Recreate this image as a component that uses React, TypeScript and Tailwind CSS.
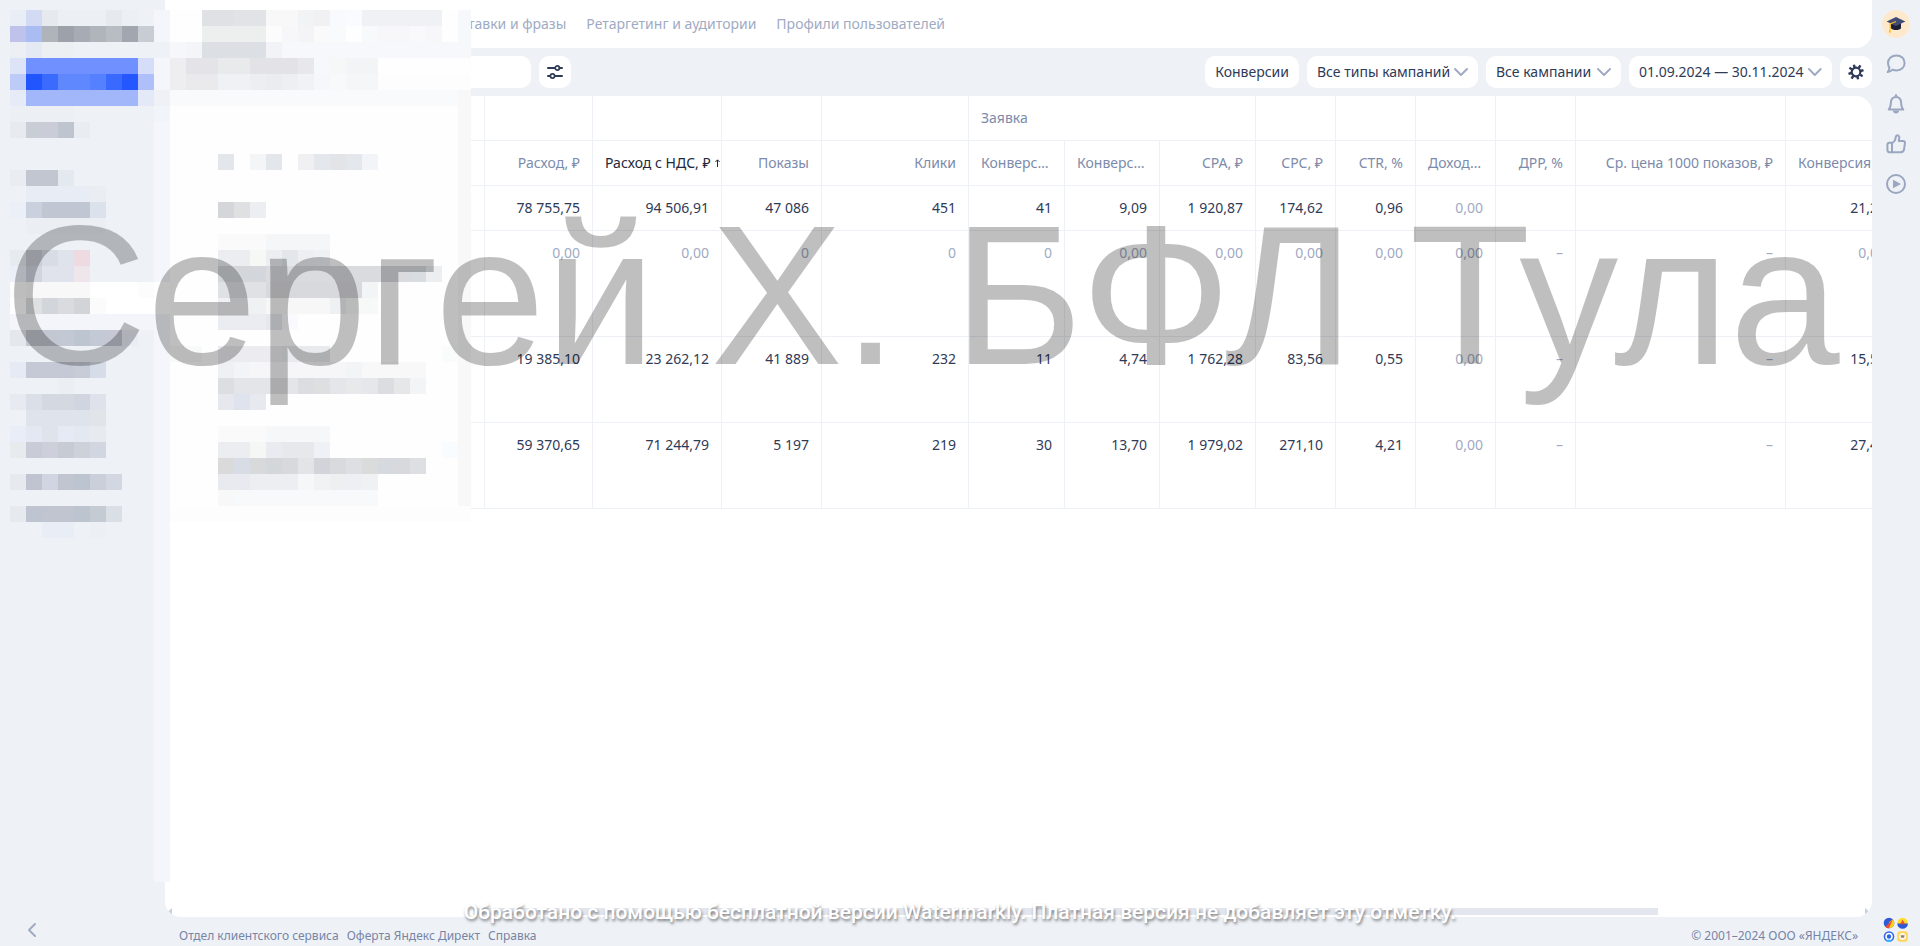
import clsx from 'clsx'
import { ChevronDown, ChevronLeft } from 'lucide-react'

type Tile = [col: number, color: string, span?: number]

const TILE = 16

// Censored area: each key is a row of the mosaic, each tile is [column, colour, span].
const mosaic: Record<number, Tile[]> = {
  0: [[0, '#e9eef6'], [1, '#d2daf4'], [2, '#e6eaef'], [3, '#ecf0f5', 3], [6, '#e6eaef'], [7, '#ecf0f5'], [12, '#dfe1e5', 2], [14, '#e2e3e7', 2], [16, '#f8f8f8', 2], [18, '#f2f3f4'], [19, '#f1f1f3'], [20, '#f8fafd'], [21, '#fafbfe'], [22, '#eff1f5', 5], [28, '#f7f8fb']],
  1: [[0, '#bfc2ea'], [1, '#a9bdf3'], [2, '#afb3ba'], [3, '#9da1a9'], [4, '#a7abb3'], [5, '#b0b4bb'], [6, '#b8bdc4'], [7, '#a2a6af'], [8, '#c8cdd4'], [12, '#edeeee', 4], [16, '#fcfcfc'], [17, '#f7f7f9'], [18, '#f4f4f6'], [19, '#fafafa'], [20, '#f9fafc'], [22, '#f8f9fb'], [23, '#f7f6f8', 2], [25, '#f9f9fc'], [26, '#f7f7fa'], [28, '#f7f8fb']],
  2: [[0, '#ecf0f4'], [1, '#e4e9f4'], [2, '#ecf0f3', 2], [8, '#eef2f7', 2], [10, '#f5f7fa'], [11, '#f3f5f8'], [12, '#dce0e5', 4], [16, '#f1f3f6'], [17, '#f6f8fc', 12]],
  3: [[0, '#dde4f8'], [1, '#7090ff', 7], [8, '#d5ddf8'], [10, '#eeeef0'], [11, '#e4e4e8', 2], [13, '#e9eaeb', 2], [15, '#e3e3e7', 3], [18, '#e8e8ec'], [19, '#f7f8fb'], [20, '#f6f8f8'], [21, '#f3f4f6', 2]],
  4: [[0, '#bccbf8'], [1, '#2156ff'], [2, '#3b6aff'], [3, '#5f88ff', 2], [5, '#5580ff'], [6, '#3a69ff'], [7, '#2457ff'], [8, '#aebffa'], [10, '#eeeef0'], [11, '#eaeaed', 2], [13, '#f0f1f4', 2], [15, '#edeef1'], [16, '#ebecf0'], [17, '#eeeff3'], [18, '#f1f2f5'], [19, '#f5f7fb'], [20, '#f7f9fb'], [21, '#f5f6f8', 2], [23, '#fdfdfd', 6]],
  5: [[0, '#e7ebf7'], [1, '#a2b6fa', 7], [8, '#e3e9f6'], [9, '#eff1f7'], [10, '#f8fafc', 18]],
  6: [[0, '#ecf0f5', 4], [9, '#f1f5f9']],
  7: [[0, '#e7ebef'], [1, '#c9cdd6'], [2, '#cacdd7'], [3, '#bfc5cf'], [4, '#e9edf2']],
  9: [[13, '#e3e7eb'], [15, '#f4f5f7'], [16, '#e3e7eb'], [18, '#f0f0f2'], [19, '#e4e8ed'], [20, '#e3e4e8'], [21, '#e4e8ed'], [22, '#f2f4f8']],
  10: [[0, '#e9edf1'], [1, '#c2c6d0', 2], [3, '#e4e8ef']],
  11: [[1, '#e7ecf5', 4], [5, '#eaeef3']],
  12: [[0, '#ebeff7'], [1, '#cad0de'], [2, '#c1c6d3', 3], [5, '#dce2eb'], [13, '#d5d6d9'], [14, '#dfe0e1'], [15, '#eceef2']],
  13: [[1, '#ebeff4', 5]],
  14: [[13, '#fafafa', 3], [16, '#f5f6f8', 4]],
  15: [[0, '#e6ebef'], [1, '#c9cdd5'], [2, '#d8dce5'], [3, '#dfe3ec'], [4, '#eddbe1'], [13, '#ebedf1', 2], [15, '#f6f8f6'], [16, '#eceef2'], [17, '#e3e7eb'], [18, '#edeff2'], [19, '#eff1f5']],
  16: [[0, '#ebeff7'], [1, '#d0d5df'], [2, '#e0e3ec', 2], [4, '#efe6eb'], [13, '#d3d7db', 3], [16, '#dadbdf', 9], [25, '#d9dde1'], [26, '#edeef0']],
  17: [[0, '#fcfcfd'], [1, '#f8f8f8', 4], [5, '#ffffff', 3], [8, '#fcfcfc'], [9, '#ffffff'], [13, '#dfe1e5', 3], [16, '#d8d9dd', 6], [22, '#f2f4f6']],
  18: [[0, '#ffffff'], [1, '#dfe0e2'], [2, '#d2d6db'], [3, '#dadbde'], [4, '#d3d4d8'], [5, '#fbfbfb'], [6, '#ffffff', 4], [13, '#f0f1f3', 3], [16, '#f7f7f7', 4], [20, '#eff0f2'], [21, '#f7f8f8', 2]],
  19: [[0, '#f3f5fa', 9], [13, '#ebecf1', 3], [16, '#e6e8ed'], [17, '#fafafe']],
  20: [[0, '#e4e8ed'], [1, '#c3c7d1', 2], [3, '#c2c8d4'], [4, '#bcc5d0'], [5, '#c3cad5'], [6, '#c6c9d4'], [7, '#e9edf4']],
  21: [[10, '#f8f9f9', 2], [13, '#ececf0', 4], [17, '#e9eaed', 3], [27, '#fafcfc']],
  22: [[0, '#e6eaf5'], [1, '#c4c9d5', 3], [4, '#c7ccd7'], [5, '#d6dce8'], [13, '#eff0f3'], [14, '#f3f4f7'], [15, '#f6f6f8', 6], [21, '#f3f4f6'], [22, '#f8f8f9', 4]],
  23: [[3, '#ebeff4'], [13, '#dddee2'], [14, '#e4e5e9', 4], [18, '#dcdde1'], [19, '#dedfe1'], [20, '#e4e6e9'], [21, '#e8e9eb'], [22, '#e5e7ea'], [23, '#dcdde1'], [24, '#e6e7e9'], [25, '#f3f4f6']],
  24: [[0, '#e7ebf1'], [1, '#dadfe8'], [2, '#d4d8e0', 2], [4, '#d1d5df'], [5, '#dfe2ea'], [13, '#e6e8ed'], [14, '#dfe3ed'], [15, '#e8e9ee']],
  25: [[1, '#dfe3ec', 4], [5, '#e1e5ea']],
  26: [[0, '#e9edf8'], [1, '#e4e8f2'], [2, '#dfe3eb'], [3, '#e5eaf4'], [4, '#e4e8f0'], [5, '#e7ebf0'], [13, '#fafafa', 3], [16, '#f6f7f9', 4]],
  27: [[0, '#e7ebee'], [1, '#c9ccd6'], [2, '#cdd0da'], [3, '#c7cbd4'], [4, '#cdd1da'], [5, '#d2d6e0'], [13, '#ebedf1', 2], [15, '#f5f7f5'], [16, '#e9ebf0'], [17, '#e7e8ec', 2], [19, '#eff1f6'], [27, '#f9fcfe']],
  28: [[13, '#dadada'], [14, '#d8dce5'], [15, '#d8d9db'], [16, '#d3d7da'], [17, '#d8d9dc'], [18, '#e3e4e8'], [19, '#d2d4d9'], [20, '#d9dade'], [21, '#dedfe3'], [22, '#dadbdb'], [23, '#d6dadf'], [24, '#d8d9dd'], [25, '#dddfe3']],
  29: [[0, '#e6eaee'], [1, '#bfc4d0'], [2, '#d0d5e1'], [3, '#c0c5d0'], [4, '#bcc4cf'], [5, '#cbcfd9'], [6, '#d3d7e2'], [13, '#e8eaef', 2], [15, '#edeef2', 3], [18, '#f6f7f9'], [19, '#f0f2f4'], [20, '#eeeff1'], [21, '#edeff4'], [22, '#f0f1f3']],
  30: [[13, '#f8f8f8'], [14, '#f8f9fa', 9]],
  31: [[0, '#e6eaee'], [1, '#bfc4d1'], [2, '#c1c5d0', 2], [4, '#bcc4cf'], [5, '#c4cbd3'], [6, '#dadfe5'], [10, '#fdfdfd', 19]],
  32: [[2, '#e9edf6', 2], [5, '#ecf0f4']],
}

function Mosaic() {
  return (
    <svg width="461" height="872" viewBox="0 0 461 872" shapeRendering="crispEdges" aria-hidden="true" className="pointer-events-none absolute left-[10px] top-[10px]">
      <rect width="144" height="872" fill="#eef2f7" />
      <rect x="160" width="301" height="512" fill="#fefefe" />
      <rect x="144" width="16" height="872" fill="#f4f6fb" />
      <rect x="448" y="80" width="16" height="416" fill="#f8f8f8" />
      {Object.entries(mosaic).map(([row, tiles]) =>
        tiles.map(([col, color, span = 1]) => (
          <rect key={`${row}-${col}`} x={col * TILE} y={Number(row) * TILE} width={span * TILE} height={TILE} fill={color} />
        )),
      )}
    </svg>
  )
}

const columns = [
  { title: '', width: 'w-[320px]' },
  { title: 'Расход, ₽', width: 'w-[108px]' },
  { title: 'Расход с НДС, ₽', width: 'w-[129px]', sorted: true },
  { title: 'Показы', width: 'w-[100px]' },
  { title: 'Клики', width: 'w-[147px]' },
  { title: 'Конверсии', width: 'w-[96px]' },
  { title: 'Конверсия, %', width: 'w-[95px]' },
  { title: 'CPA, ₽', width: 'w-[96px]' },
  { title: 'CPC, ₽', width: 'w-[80px]' },
  { title: 'CTR, %', width: 'w-[80px]' },
  { title: 'Доход, ₽', width: 'w-[80px]' },
  { title: 'ДРР, %', width: 'w-[80px]' },
  { title: 'Ср. цена 1000 показов, ₽', width: 'w-[210px]' },
  { title: 'Конверсия, %', width: 'w-[113px]' },
]

const rows = [
  { height: 'h-[45px]', cells: ['78 755,75', '94 506,91', '47 086', '451', '41', '9,09', '1 920,87', '174,62', '0,96', '0,00', '', '', '21,28'] },
  { height: 'h-[106px]', cells: ['0,00', '0,00', '0', '0', '0', '0,00', '0,00', '0,00', '0,00', '0,00', '–', '–', '0,00'] },
  { height: 'h-[86px]', cells: ['19 385,10', '23 262,12', '41 889', '232', '11', '4,74', '1 762,28', '83,56', '0,55', '0,00', '–', '–', '15,52'] },
  { height: 'h-[86px]', cells: ['59 370,65', '71 244,79', '5 197', '219', '30', '13,70', '1 979,02', '271,10', '4,21', '0,00', '–', '–', '27,40'] },
]

const isEmpty = (value: string) => value === '0' || value === '0,00' || value === '–'

function StatsTable() {
  return (
    <table className="w-[1734px] table-fixed border-separate border-spacing-0 text-sm leading-5">
      <colgroup>
        {columns.map((column, i) => (
          <col key={i} className={column.width} />
        ))}
      </colgroup>
      <thead className="text-[#7d8bab]">
        <tr className="h-[45px]">
          {columns.slice(0, 5).map((_, i) => (
            <td key={i} className="border-b border-r border-[#edf0f5]" />
          ))}
          <th colSpan={3} className="border-b border-r border-[#edf0f5] px-3 text-left font-normal">Заявка</th>
          {columns.slice(8).map((_, i) => (
            <td key={i} className="border-b border-r border-[#edf0f5]" />
          ))}
        </tr>
        <tr className="h-[45px]">
          {columns.map((column, i) => (
            <th
              key={i}
              className={clsx(
                'border-b border-r border-[#edf0f5] px-3 text-right font-normal last:text-clip',
                column.sorted ? 'whitespace-nowrap text-[#22293d]' : 'truncate',
              )}
            >
              {column.sorted ? (
                <span className="-mr-[9px] inline-flex items-center gap-1">
                  {column.title}
                  <svg width="5" height="8" viewBox="0 0 5 8" fill="none" stroke="currentColor" aria-hidden="true">
                    <path d="M2.5 8V1M.4 3l2.1-2.2L4.6 3" />
                  </svg>
                </span>
              ) : (
                column.title
              )}
            </th>
          ))}
        </tr>
      </thead>
      <tbody>
        {rows.map((row, i) => (
          <tr key={i} className={row.height}>
            <td className="border-b border-r border-[#edf0f5]" />
            {row.cells.map((value, j) => (
              <td
                key={j}
                className={clsx(
                  'whitespace-nowrap border-b border-r border-[#edf0f5] px-3 pt-3 text-right align-top',
                  isEmpty(value) ? 'text-[#a0abc3]' : 'text-[#2f3a57]',
                )}
              >
                {value}
              </td>
            ))}
          </tr>
        ))}
      </tbody>
    </table>
  )
}

function FilterSelect({ label, width }: { label: string; width: string }) {
  return (
    <label className={clsx('relative block', width)}>
      <select aria-label={label} className="h-8 w-full appearance-none rounded-[10px] bg-white px-[10px] text-sm text-[#2f3a57] outline-none">
        <option>{label}</option>
      </select>
      <ChevronDown size={24} className="pointer-events-none absolute right-[5px] top-1 text-[#a0abc3]" />
    </label>
  )
}

function Toolbar() {
  return (
    <div className="flex items-center justify-between py-2">
      <div className="flex gap-2">
        <input type="text" aria-label="Поиск" className="h-8 w-[366px] rounded-[10px] bg-white px-3 text-sm outline-none" />
        <button type="button" aria-label="Фильтры" className="flex size-8 items-center justify-center rounded-[10px] bg-white text-[#2f3a57]">
          <svg width="16" height="16" viewBox="0 0 16 16" fill="none" stroke="currentColor" strokeWidth="2" strokeLinecap="round">
            <path d="M1 4h7M12.5 4H15M1 12h2M8 12h7" />
            <circle cx="10.3" cy="4" r="2.1" strokeWidth="1.7" />
            <circle cx="5.5" cy="12" r="2.1" strokeWidth="1.7" />
          </svg>
        </button>
      </div>
      <div className="flex gap-2 text-sm text-[#2f3a57]">
        <button type="button" className="h-8 rounded-[10px] bg-white px-[10px]">Конверсии</button>
        <FilterSelect label="Все типы кампаний" width="w-[171px]" />
        <FilterSelect label="Все кампании" width="w-[135px]" />
        <button type="button" className="flex h-8 w-[203px] items-center justify-between whitespace-nowrap rounded-[10px] bg-white pl-[10px] pr-[5px]">
          01.09.2024 — 30.11.2024
          <ChevronDown size={24} className="text-[#a0abc3]" />
        </button>
        <button type="button" aria-label="Настройки" className="flex size-8 items-center justify-center rounded-[10px] bg-white text-[#2f3a57]">
          <svg width="16" height="16" viewBox="0 0 16 16" fill="none" stroke="currentColor">
            <circle cx="8" cy="8" r="4.3" strokeWidth="2.2" />
            <g strokeWidth="2.4">
              <path d="M6.6 3.6 5.9.7M10.8 4l1.6-2.6M12.6 7l2.9-.9M12.2 10.8l2.4 1.4M9.4 12.4l.7 2.9M5.2 12l-1.6 2.6M3.4 9l-2.9.9M3.8 5.2 1.4 3.8" />
            </g>
          </svg>
        </button>
      </div>
    </div>
  )
}

function Rail() {
  return (
    <aside className="flex w-12 shrink-0 flex-col items-center justify-between pb-[3px] pt-[10px] text-[#9ba7c0]">
      <div className="flex flex-col items-center gap-5">
        <button type="button" aria-label="Обучение" className="-mb-1 flex size-7 items-center justify-center rounded-full bg-[#ffe9cc]">
          <svg width="20" height="20" viewBox="0 0 20 20">
            <path d="M5 9v5.2c1 2.4 9 2.4 10 0V9z" fill="#1d2136" />
            <path d="M10 3 .6 7.6 10 12l9.4-4.4z" fill="#414c76" />
            <path d="M10 7.5 4.2 10v4.3" fill="none" stroke="#f3b61f" strokeWidth="1.3" />
            <path d="m4.2 13-1.6 5.2 2.4.5z" fill="#f7c22d" />
          </svg>
        </button>
        <button type="button" aria-label="Чат">
          <svg width="20" height="20" viewBox="0 0 20 20" fill="none" stroke="currentColor" strokeWidth="2" strokeLinejoin="round">
            <path d="M10.5 1.4c4.7 0 8.1 3.2 8.1 7.5s-3.4 7.6-8.1 7.6c-1.4 0-2.7-.3-3.8-.9-1.3 1.4-3 2.2-5 2.5 1-1.2 1.7-2.7 1.7-4.4C2.7 12.5 2 10.8 2 8.9c0-4.3 3.8-7.5 8.5-7.5z" />
          </svg>
        </button>
        <button type="button" aria-label="Уведомления">
          <svg width="20" height="20" viewBox="0 0 20 20" fill="none" stroke="currentColor" strokeWidth="2" strokeLinejoin="round">
            <path d="M2.7 15.6c1.5-1.5 2-3.5 2.2-7C5.1 5.2 7 3 10 3s4.9 2.2 5.1 5.6c.2 3.5.7 5.5 2.2 7z" />
            <path d="M10 .3v2.5" strokeWidth="2.2" />
            <path d="M6.7 16.5h6.6c-.4 1.9-1.6 3-3.3 3s-2.9-1.1-3.3-3z" fill="currentColor" stroke="none" />
          </svg>
        </button>
        <button type="button" aria-label="Оценить">
          <svg width="20" height="20" viewBox="0 0 20 20" fill="none" stroke="currentColor" strokeWidth="2" strokeLinejoin="round">
            <path d="M6 9c2.3-1 3.3-2.6 3.6-5 .2-1.9.7-2.7 1.9-2.7 1.6 0 2 1.6 1.7 3.2L12.8 7h4.2c1.6 0 2.1 1 1.9 2.3l-.8 5.9c-.3 1.9-1.5 3-3.3 3H6z" />
            <path d="M6 8.8H3.2C1.7 8.8 1.4 10 1.4 11.5v4c0 1.8.4 2.7 1.8 2.7H6z" />
          </svg>
        </button>
        <button type="button" aria-label="Видео">
          <svg width="20" height="20" viewBox="0 0 20 20" fill="none" stroke="currentColor" strokeWidth="2">
            <circle cx="10" cy="10" r="9" />
            <path d="M7 5.8v8.4l8-4.2z" fill="currentColor" stroke="none" />
          </svg>
        </button>
      </div>
      <button type="button" aria-label="Сервисы">
        <svg width="26" height="26" viewBox="0 0 26 26">
          <circle cx="6" cy="6" r="5.3" fill="#2d5bd7" />
          <path d="M6 11.3V5.2L9.8 2.3A5.3 5.3 0 0 1 6 11.3z" fill="#ffd21c" />
          <path d="M2.3 9.8 9.8 2.3 6 11.3a5.3 5.3 0 0 1-3.7-1.5z" fill="#ee4a35" />
          <circle cx="19.6" cy="6" r="5.3" fill="#ffdd2d" />
          <path d="M14.3 6.5h10.6a5.3 5.3 0 0 1-10.6 0z" fill="#2d5bd7" />
          <path d="m19.6 2.8 2.5 4.5h-5z" fill="#ee4a35" />
          <circle cx="6" cy="19.5" r="5.3" fill="#2c63e8" />
          <circle cx="6" cy="19.5" r="3" fill="none" stroke="#ffffff" strokeWidth="1.6" />
          <path d="M3 24c1.5-2 4.5-2 6 0a5.3 5.3 0 0 1-6 0z" fill="#35b8ff" />
          <rect x="14.3" y="14.2" width="10.6" height="10.6" rx="3" fill="#ffd45e" />
          <circle cx="19.6" cy="19.5" r="3.6" fill="#fff6dc" />
          <path d="M17.6 18.2h4l-.6 2.6h-2.8z" fill="#8a8577" />
        </svg>
      </button>
    </aside>
  )
}

export default function App() {
  return (
    <div className="relative flex min-h-screen overflow-hidden bg-[#eef2f7] font-['Noto_Sans','Open_Sans',sans-serif]">
      <nav className="flex w-[165px] shrink-0 items-end pb-1 pl-5">
        <button type="button" aria-label="Свернуть меню" className="text-[#a0abc3]">
          <ChevronLeft size={24} />
        </button>
      </nav>
      <main className="flex min-w-0 flex-1 flex-col">
        <header className="flex h-12 items-center gap-5 rounded-br-2xl bg-white pl-[294px] text-sm text-[#a0abc3]">
          <a href="#phrases">Ставки и фразы</a>
          <a href="#audience">Ретаргетинг и аудитории</a>
          <a href="#profiles">Профили пользователей</a>
        </header>
        <Toolbar />
        <section className="flex flex-1 flex-col justify-between overflow-hidden rounded-b-2xl rounded-tr-2xl bg-white">
          <StatsTable />
          <div className="flex items-center pb-[2px] text-[#c9cfdd]">
            <svg width="8" height="7" viewBox="0 0 8 7"><path d="M7 0v7L3 3.5z" fill="currentColor" /></svg>
            <div className="ml-[300px] mr-[206px] h-[7px] flex-1 bg-[#e3e6ef]" />
            <svg width="8" height="7" viewBox="0 0 8 7"><path d="M1 0v7l4-3.5z" fill="currentColor" /></svg>
          </div>
        </section>
        <footer className="flex h-[29px] items-center justify-between px-[14px] pt-2 text-xs text-[#7684a6]">
          <div className="flex gap-2">
            <a href="#support">Отдел клиентского сервиса</a>
            <a href="#offer">Оферта Яндекс Директ</a>
            <a href="#help">Справка</a>
          </div>
          <span>© 2001–2024 ООО «ЯНДЕКС»</span>
        </footer>
      </main>
      <Rail />
      <Mosaic />
      <p className="pointer-events-none absolute left-1 top-[184px] whitespace-nowrap font-['Liberation_Sans',Arial,sans-serif] text-[198px] leading-[224px] text-black/25">
        Сергей Х. БФЛ Тула
      </p>
      <p className="pointer-events-none absolute inset-x-0 bottom-[22px] whitespace-nowrap text-center font-[Roboto,sans-serif] text-[21px] font-medium leading-6 text-white [text-shadow:1px_2px_3px_rgb(0_0_0/0.5)]">
        Обработано с помощью бесплатной версии Watermarkly. Платная версия не добавляет эту отметку.
      </p>
    </div>
  )
}
